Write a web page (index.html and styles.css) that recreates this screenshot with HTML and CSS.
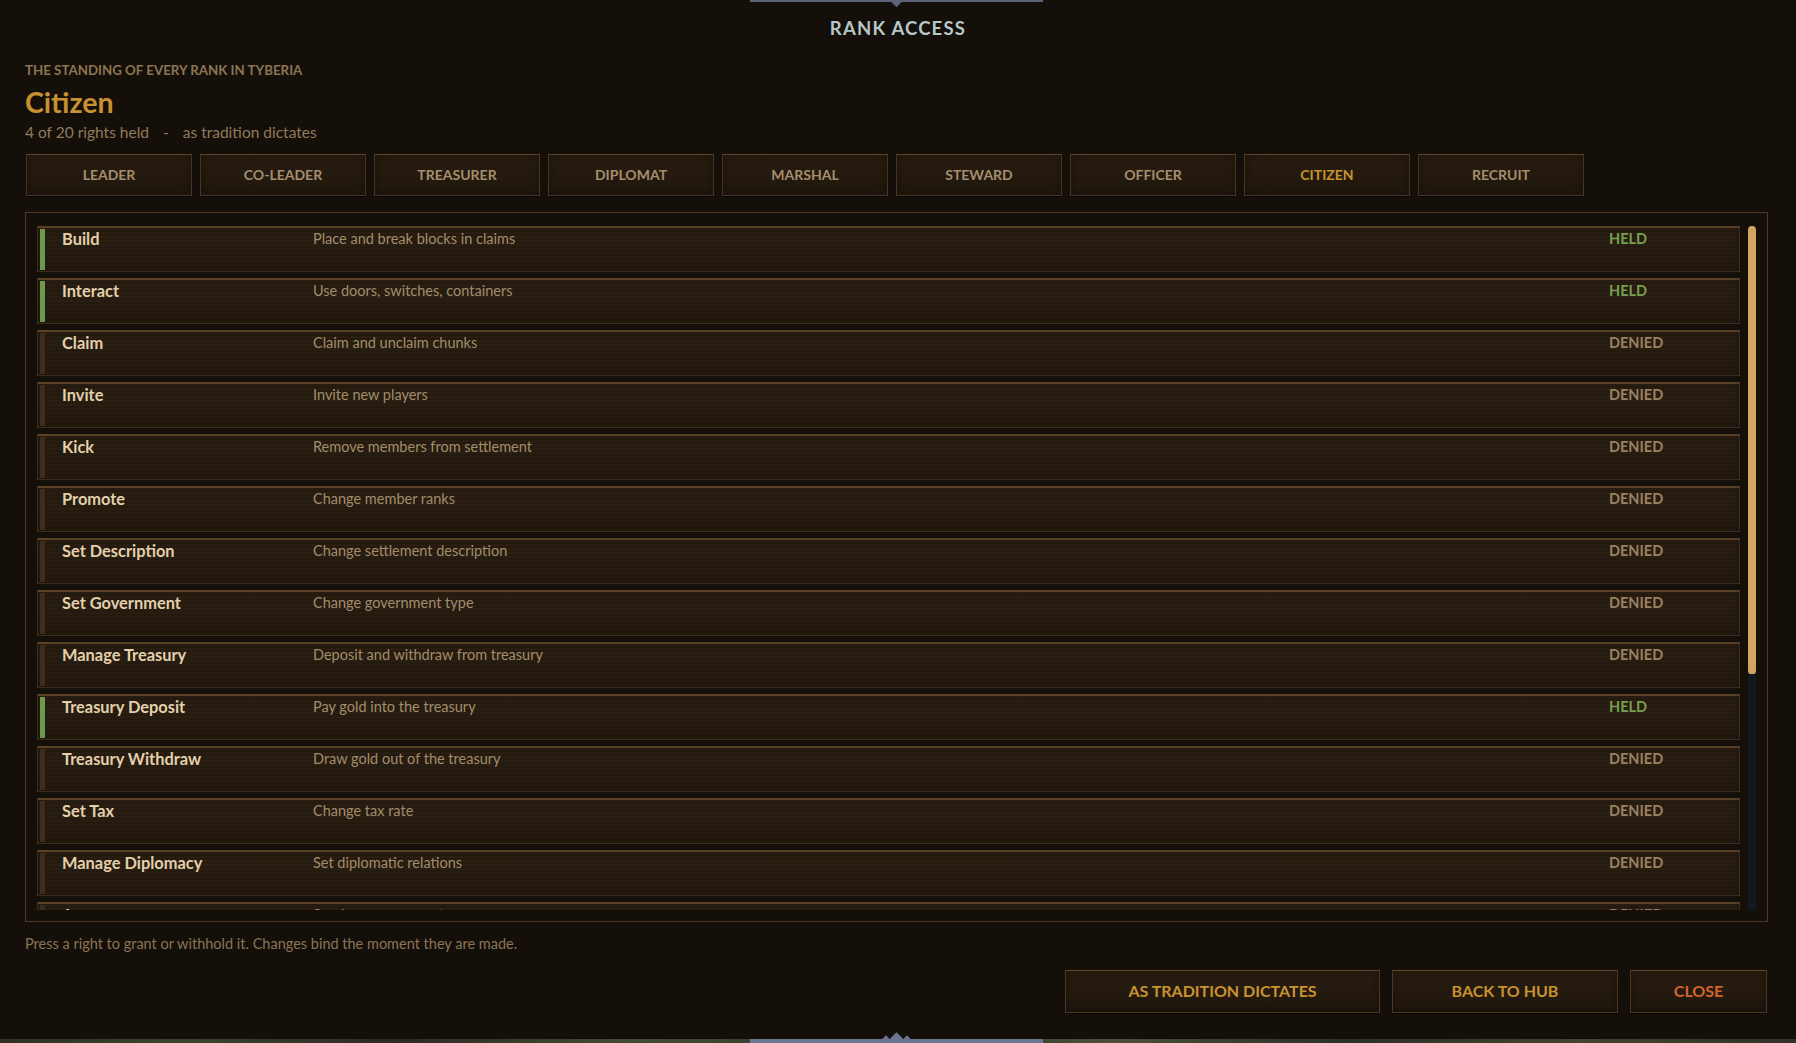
FILE: index.html
```html
<!DOCTYPE html>
<html>
<head>
<meta charset="utf-8">
<link rel="stylesheet" href="styles.css">
</head>
<body>
<div class="screen">
  <div class="deco deco-top"><span class="deco-gem"></span></div>
  <header class="head">
    <h1 class="title">RANK ACCESS</h1>
  </header>
  <section class="intro">
    <div class="kicker">THE STANDING OF EVERY RANK IN TYBERIA</div>
    <div class="rank-name">Citizen</div>
    <div class="count">4 of 20 rights held<span class="sep">-</span>as tradition dictates</div>
  </section>
  <nav class="tabs">
    <button class="tab">LEADER</button>
    <button class="tab">CO-LEADER</button>
    <button class="tab">TREASURER</button>
    <button class="tab">DIPLOMAT</button>
    <button class="tab">MARSHAL</button>
    <button class="tab">STEWARD</button>
    <button class="tab">OFFICER</button>
    <button class="tab active">CITIZEN</button>
    <button class="tab">RECRUIT</button>
  </nav>
  <div class="panel">
    <div class="list">
      <div class="row held"><span class="mark"></span><span class="label">Build</span><span class="desc">Place and break blocks in claims</span><span class="status">HELD</span></div>
      <div class="row held"><span class="mark"></span><span class="label">Interact</span><span class="desc">Use doors, switches, containers</span><span class="status">HELD</span></div>
      <div class="row"><span class="mark"></span><span class="label">Claim</span><span class="desc">Claim and unclaim chunks</span><span class="status">DENIED</span></div>
      <div class="row"><span class="mark"></span><span class="label">Invite</span><span class="desc">Invite new players</span><span class="status">DENIED</span></div>
      <div class="row"><span class="mark"></span><span class="label">Kick</span><span class="desc">Remove members from settlement</span><span class="status">DENIED</span></div>
      <div class="row"><span class="mark"></span><span class="label">Promote</span><span class="desc">Change member ranks</span><span class="status">DENIED</span></div>
      <div class="row"><span class="mark"></span><span class="label">Set Description</span><span class="desc">Change settlement description</span><span class="status">DENIED</span></div>
      <div class="row"><span class="mark"></span><span class="label">Set Government</span><span class="desc">Change government type</span><span class="status">DENIED</span></div>
      <div class="row"><span class="mark"></span><span class="label">Manage Treasury</span><span class="desc">Deposit and withdraw from treasury</span><span class="status">DENIED</span></div>
      <div class="row held"><span class="mark"></span><span class="label">Treasury Deposit</span><span class="desc">Pay gold into the treasury</span><span class="status">HELD</span></div>
      <div class="row"><span class="mark"></span><span class="label">Treasury Withdraw</span><span class="desc">Draw gold out of the treasury</span><span class="status">DENIED</span></div>
      <div class="row"><span class="mark"></span><span class="label">Set Tax</span><span class="desc">Change tax rate</span><span class="status">DENIED</span></div>
      <div class="row"><span class="mark"></span><span class="label">Manage Diplomacy</span><span class="desc">Set diplomatic relations</span><span class="status">DENIED</span></div>
      <div class="row"><span class="mark"></span><span class="label">Announce</span><span class="desc">Send announcements</span><span class="status">DENIED</span></div>
      <div class="row"><span class="mark"></span><span class="label">Set Spawn</span><span class="desc">Move the settlement spawn</span><span class="status">DENIED</span></div>
      <div class="row held"><span class="mark"></span><span class="label">Use Spawn</span><span class="desc">Travel to the settlement spawn</span><span class="status">HELD</span></div>
      <div class="row"><span class="mark"></span><span class="label">Manage Ranks</span><span class="desc">Edit rank permissions</span><span class="status">DENIED</span></div>
      <div class="row"><span class="mark"></span><span class="label">Rename</span><span class="desc">Change settlement name</span><span class="status">DENIED</span></div>
      <div class="row"><span class="mark"></span><span class="label">Declare War</span><span class="desc">Open hostilities with a settlement</span><span class="status">DENIED</span></div>
      <div class="row"><span class="mark"></span><span class="label">Disband</span><span class="desc">Dissolve the settlement</span><span class="status">DENIED</span></div>
    </div>
    <div class="scrollbar"><div class="thumb"></div></div>
  </div>
  <p class="hint">Press a right to grant or withhold it. Changes bind the moment they are made.</p>
  <div class="actions">
    <button class="btn btn-wide">AS TRADITION DICTATES</button>
    <button class="btn btn-mid">BACK TO HUB</button>
    <button class="btn btn-close">CLOSE</button>
  </div>
  <div class="ground"></div>
  <div class="deco deco-bottom"><span class="deco-gem"></span><span class="deco-wing left"></span><span class="deco-wing right"></span></div>
</div>
</body>
</html>
```

FILE: styles.css
```css
* { box-sizing: border-box; }
html, body { margin: 0; padding: 0; }
body {
  background: #150f0a;
  font-family: Lato, "Noto Sans", "Liberation Sans", sans-serif;
  color: #a48f6c;
  width: 1796px;
  height: 1043px;
  overflow: hidden;
}
.screen {
  position: relative;
  width: 1796px;
  height: 1043px;
  display: flex;
  flex-direction: column;
  background: #150f0a;
}
.deco {
  position: absolute;
  left: 750px;
  width: 293px;
  height: 3px;
  background: #5b6279;
}
.deco-top { top: 0; height: 2px; }
.deco-top .deco-gem {
  position: absolute;
  left: 141px;
  top: -6px;
  width: 11px;
  height: 11px;
  background: #5b6279;
  transform: rotate(45deg);
}
.deco-bottom { bottom: 0; height: 4px; background: #6b7592; }
.deco-bottom .deco-gem {
  position: absolute;
  left: 142px;
  top: -5px;
  width: 9px;
  height: 9px;
  background: #6b7592;
  transform: rotate(45deg);
}
.deco-bottom .deco-wing {
  position: absolute;
  top: -2px;
  width: 8px;
  height: 8px;
  background: #6b7592;
  transform: rotate(45deg);
}
.deco-bottom .deco-wing.left { left: 132px; }
.deco-bottom .deco-wing.right { left: 153px; }

.head {
  height: 51px;
  display: flex;
  justify-content: center;
  align-items: flex-end;
}
.title {
  margin: 0;
  font-size: 18.5px;
  font-weight: 700;
  letter-spacing: 1.2px;
  color: #b7c6c6;
  line-height: 22px;
  padding-bottom: 12px;
}
.intro {
  padding: 11px 25px 0;
}
.kicker {
  font-size: 13.3px;
  font-weight: 700;
  color: #8c7552;
  letter-spacing: 0;
  line-height: 16px;
}
.rank-name {
  margin-top: 9px;
  font-size: 28.5px;
  font-weight: 700;
  color: #c8912f;
  line-height: 30px;
}
.count {
  margin-top: 5px;
  font-size: 15.5px;
  color: #8f7b5b;
  line-height: 20px;
}
.count .sep { margin: 0 14px 0 14px; }

.tabs {
  display: flex;
  gap: 8px;
  padding: 12px 0 0 26px;
}
.tab {
  width: 166px;
  height: 42px;
  background: linear-gradient(180deg, #271c10 0%, #20170d 100%);
  border: 1px solid #4a3520;
  border-top-color: #5e4327;
  box-shadow: inset 0 0 8px rgba(0,0,0,0.35), 0 1px 0 rgba(0,0,0,0.6);
  font-family: Lato, "Noto Sans", sans-serif;
  font-size: 14px;
  font-weight: 700;
  color: #a58e6c;
  padding: 0 0 2px;
}
.tab.active { color: #c8922f; }

.panel {
  margin: 16px 28px 0 25px;
  border: 1px solid #4f3921;
  padding: 13px 11px 11px 11px;
  height: 710px;
  display: flex;
  gap: 8px;
}
.list {
  flex: 1;
  height: 684px;
  overflow: hidden;
  display: flex;
  flex-direction: column;
  gap: 6px;
}
.scrollbar {
  width: 8px;
  height: 684px;
  background: #121820;
}
.thumb {
  height: 448px;
  background: #d0a563;
  border-radius: 4px 4px 3px 3px;
}

.row {
  position: relative;
  flex: 0 0 46px;
  height: 46px;
  display: grid;
  grid-template-columns: 251px 1fr 130px;
  align-items: start;
  padding: 1px 0 0 24px;
  background:
    repeating-linear-gradient(180deg, rgba(255,255,255,0.012) 0 2px, rgba(0,0,0,0.03) 2px 4px),
    linear-gradient(180deg, #291d11 0%, #22180d 100%);
  border: 1px solid #3f2d1b;
  border-top: 2px solid #5a4024;
  box-shadow: inset 0 0 10px rgba(0,0,0,0.25);
}
.mark {
  position: absolute;
  left: 2px;
  top: 1px;
  bottom: 1px;
  width: 5px;
  background: #3c2d1f;
}
.row.held .mark { background: #6b9a4c; }
.label {
  font-size: 16.4px;
  font-weight: 700;
  color: #e2d0ab;
  line-height: 20px;
}
.desc {
  font-size: 14.5px;
  color: #a28d6a;
  line-height: 20px;
}
.status {
  font-size: 14.5px;
  font-weight: 700;
  color: #9a8261;
  line-height: 20px;
}
.row.held .status { color: #76a04f; }

.hint {
  margin: 13px 0 0 25px;
  font-size: 14.5px;
  color: #8a7556;
  line-height: 18px;
}
.actions {
  display: flex;
  justify-content: flex-end;
  gap: 12px;
  padding: 17px 29px 0 0;
}
.btn {
  height: 43px;
  background: linear-gradient(180deg, #271c10 0%, #20170d 100%);
  border: 1px solid #4d3720;
  border-top-color: #64482a;
  box-shadow: inset 0 0 10px rgba(0,0,0,0.35), 0 1px 0 rgba(0,0,0,0.6);
  font-family: Lato, "Noto Sans", sans-serif;
  font-size: 16px;
  font-weight: 700;
  color: #c8922f;
  padding: 0 0 2px;
}
.btn-wide { width: 315px; }
.btn-mid { width: 226px; }
.btn-close { width: 137px; color: #d2652b; }

.ground {
  position: absolute;
  left: 0;
  right: 0;
  bottom: 0;
  height: 4px;
  background: linear-gradient(90deg, #2e3122 0%, #3d4230 10%, #2a2c20 22%, #454a35 35%, #33362a 50%, #4a4e3a 62%, #2c2f24 75%, #41452f 88%, #2f3225 100%);
}
```
